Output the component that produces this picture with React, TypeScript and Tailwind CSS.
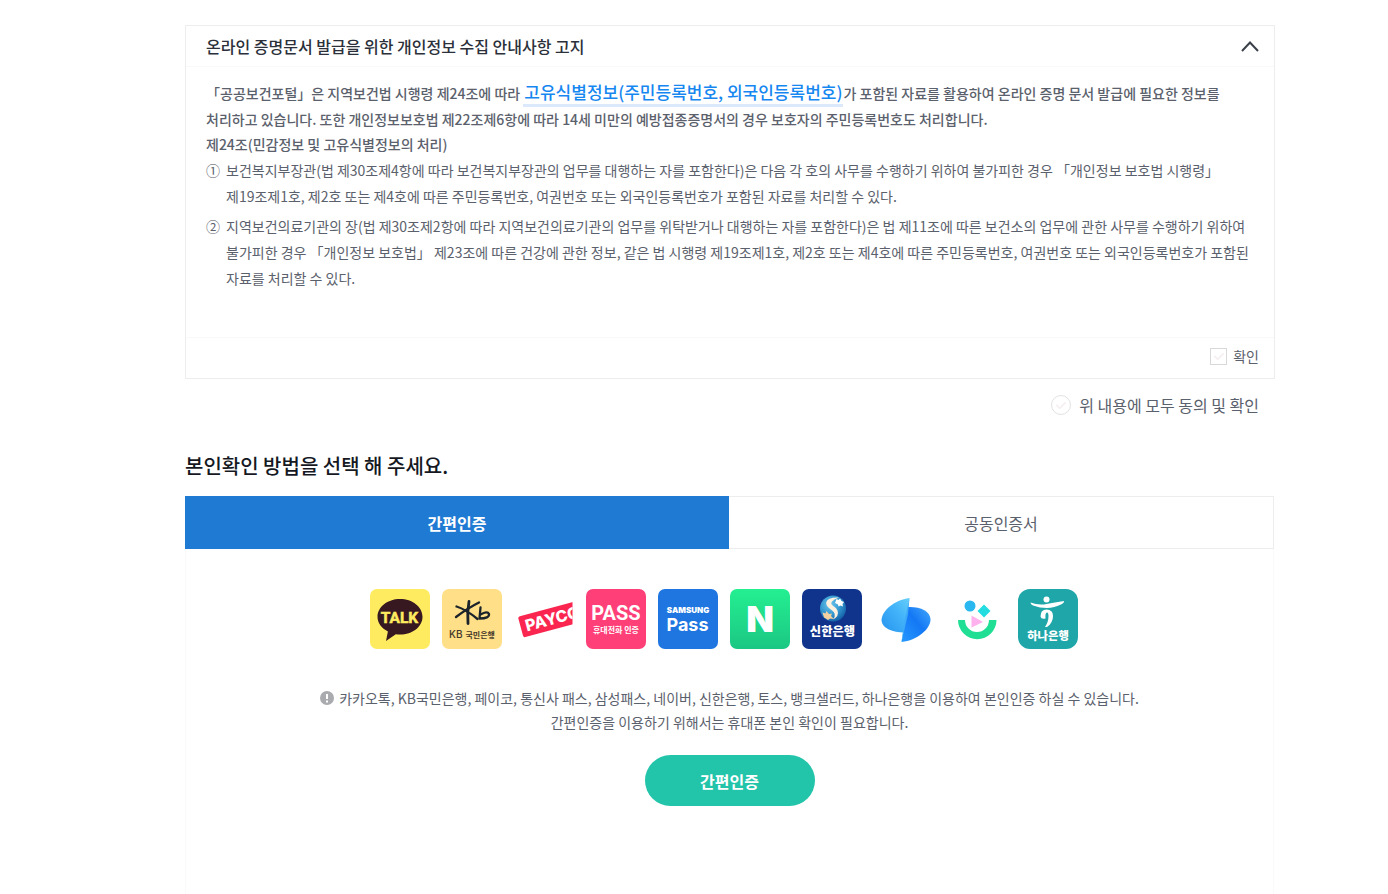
import { useState } from "react";
import type { ReactNode } from "react";

const KR = "'Noto Sans CJK KR', sans-serif";

function Tile({ fill, radius = 7, children }: { fill: string; radius?: number; children: ReactNode }) {
  return (
    <svg viewBox="0 0 60 60" className="size-[60px]" aria-hidden="true">
      <rect width="60" height="60" rx={radius} fill={fill} />
      {children}
    </svg>
  );
}

function Kakao() {
  return (
    <Tile fill="#ffeb60">
      <path d="M30 10C17.500 10 7.500 18 7.500 27.800c0 6.200 4 11.500 10.400 14.600L16 52l9.800-6.700c1.300.2 2.800.3 4.200.3 12.500 0 22.500-7.800 22.500-17.800S42.500 10 30 10z" fill="#371820" />
      <text x="29.500" y="34" textAnchor="middle" fontFamily="'Liberation Sans Narrow', Roboto, sans-serif" fontWeight="700" fontSize="15.500" fill="#ffeb60" stroke="#ffeb60" strokeWidth=".5">TALK</text>
    </Tile>
  );
}

function Kb() {
  return (
    <Tile fill="#ffdf87">
      <g fill="none" stroke="#1b232b" strokeWidth="2.300" strokeLinecap="round" strokeLinejoin="round">
        <path d="M27 12.500Q25 23 26 34.500" strokeWidth="2.800" />
        <path d="M14.500 17.500Q24 20.500 35.500 30" />
        <path d="M37 13.500Q26 19 14 28" />
        <path d="M38.500 18.500L37.500 29.500Q47.500 29.500 47 25Q45.500 21.500 38.500 25.500" />
      </g>
      <text x="7" y="49" fontFamily="Inter, sans-serif" fontWeight="500" fontSize="10" fill="#42372a">KB</text>
      <text x="23.500" y="48.500" fontFamily={KR} fontWeight="700" fontSize="8" fill="#42372a">국민은행</text>
    </Tile>
  );
}

function Payco() {
  return (
    <Tile fill="#ffffff">
      <clipPath id="payco-clip"><rect width="58.500" height="60" /></clipPath>
      <g clipPath="url(#payco-clip)">
        <g transform="rotate(-15 5 28)">
          <rect x="4" y="27.500" width="72" height="21.500" rx="2" fill="#fb2650" />
          <text x="9" y="44" fontFamily="Inter, sans-serif" fontWeight="800" fontSize="16" fill="#fff">PAYCO</text>
        </g>
      </g>
    </Tile>
  );
}

function Pass() {
  return (
    <Tile fill="#ff3f78">
      <text x="30" y="31" textAnchor="middle" fontFamily="'Liberation Sans Narrow', Roboto, sans-serif" fontWeight="700" fontSize="20" fill="#fff">PASS</text>
      <text x="30" y="43.500" textAnchor="middle" fontFamily={KR} fontWeight="700" fontSize="8" fill="#fff">휴대전화 인증</text>
    </Tile>
  );
}

function SamsungPass() {
  return (
    <Tile fill="#1f76e0">
      <text x="30" y="23.500" textAnchor="middle" fontFamily="Inter, sans-serif" fontWeight="900" fontSize="8" fill="#fff">SAMSUNG</text>
      <text x="29.500" y="41.500" textAnchor="middle" fontFamily="Inter, sans-serif" fontWeight="700" fontSize="18" fill="#fff">Pass</text>
    </Tile>
  );
}

function Naver() {
  return (
    <Tile fill="url(#naver-fill)">
      <defs>
        <linearGradient id="naver-fill" x1="0" y1="0" x2="0" y2="1">
          <stop offset="0" stopColor="#24ef91" />
          <stop offset="1" stopColor="#1bc783" />
        </linearGradient>
      </defs>
      <text x="30" y="43" textAnchor="middle" fontFamily="Inter, sans-serif" fontWeight="900" fontSize="36" fill="#fff">N</text>
    </Tile>
  );
}

function Shinhan() {
  return (
    <Tile fill="#10348b">
      <defs>
        <radialGradient id="shinhan-globe" cx=".4" cy=".35" r=".65">
          <stop offset="0" stopColor="#6fc8ed" />
          <stop offset=".6" stopColor="#3296cf" />
          <stop offset="1" stopColor="#1765ac" />
        </radialGradient>
      </defs>
      <circle cx="31" cy="19.500" r="13" fill="url(#shinhan-globe)" />
      <path d="M37 8.500Q25.500 8 24.200 13.500q-.5 3.500 5.300 7.500 6 4 1.500 9.500 6.500-3.500 4.500-9-1.500-3-5.500-5.500-3.500-3.500 7-7.500z" fill="#fff1df" />
      <path d="M33 14l1.500-4 2 1 1.500-1.500 1.500 2.500 2.500 1-1.500 2 .5 2.500-2.500-1-2 1-.5-2z" fill="#fff" />
      <path d="M20.500 23.500l3 1 1-2.500 2.500 3 3-.5-1 2.500 3 3-4-.5-2 1.500-3-2-1-.5z" fill="#f4d1a0" />
      <text x="30.500" y="47" textAnchor="middle" fontFamily={KR} fontWeight="900" fontSize="12.300" fill="#fff">신한은행</text>
    </Tile>
  );
}

function Toss() {
  return (
    <Tile fill="#ffffff">
      <defs>
        <linearGradient id="toss-left" x1="0" y1="1" x2="1" y2="0">
          <stop offset="0" stopColor="#2593ee" />
          <stop offset=".6" stopColor="#43b4fa" />
          <stop offset="1" stopColor="#66cff8" />
        </linearGradient>
        <linearGradient id="toss-right" x1="1" y1="0" x2="0" y2="1">
          <stop offset="0" stopColor="#43aafa" />
          <stop offset=".45" stopColor="#1478f5" />
          <stop offset="1" stopColor="#2699ff" />
        </linearGradient>
      </defs>
      <path d="M35.500 9C20 11 7.500 22 7.500 31.500 8 39.500 19 43.500 30 43.500z" fill="url(#toss-left)" />
      <path d="M34 18C46 17.500 56.500 22 56.500 30.500 56.500 40 43 51.500 27.500 53z" fill="url(#toss-right)" />
      <path d="M35.500 9L34 25 27.500 53 30 34z" fill="#3fabf8" />
    </Tile>
  );
}

function BankSalad() {
  return (
    <Tile fill="#ffffff">
      <circle cx="24" cy="17" r="5.500" fill="#29b7ef" />
      <path d="M38 15.500l6.500 6.500-6.500 6.500-6.500-6.500z" fill="#23dce0" />
      <path d="M25.500 26.500l11.500 6.500-11.500 5.500z" fill="#ffb2ed" />
      <path d="M12 31h7a12 12 0 0 0 24 0h7.500a19.250 19.250 0 0 1-38.500 0z" fill="#20df94" />
    </Tile>
  );
}

function Hana() {
  return (
    <Tile fill="#1fa6a9" radius={12}>
      <circle cx="28.500" cy="10.500" r="3" fill="#fff" />
      <path d="M12.500 13.500q8 3 16 1.500t17.500-3q.5 1.500-2 3-8 4-15 4t-14-2.500q-2.500-1-2.500-3z" fill="#fff" />
      <path d="M22.500 27.500q0-7 6-7 6.500 0 6.500 6.500 0 7-6 11h-2q3.500-5 3.500-11 0-3.500-1.500-3.500-2 0-1.500 6-4.500 1-5-2z" fill="#fff" />
      <text x="30" y="50.500" textAnchor="middle" fontFamily={KR} fontWeight="900" fontSize="11.300" fill="#fff">하나은행</text>
    </Tile>
  );
}

const providers = [
  { name: "카카오톡", Logo: Kakao },
  { name: "KB국민은행", Logo: Kb },
  { name: "페이코", Logo: Payco },
  { name: "통신사 패스", Logo: Pass },
  { name: "삼성패스", Logo: SamsungPass },
  { name: "네이버", Logo: Naver },
  { name: "신한은행", Logo: Shinhan },
  { name: "토스", Logo: Toss },
  { name: "뱅크샐러드", Logo: BankSalad },
  { name: "하나은행", Logo: Hana },
];

function Check({ round = false, children }: { round?: boolean; children: ReactNode }) {
  return (
    <label className={round ? "flex items-center gap-2 text-base" : "flex items-center gap-1.5 text-sm"}>
      <span className="relative flex items-center justify-center">
        <input
          type="checkbox"
          className={
            round
              ? "peer size-5 appearance-none rounded-full border border-[#e2e2e2] bg-white"
              : "peer size-[17px] appearance-none border border-[#d8d8d8] bg-white"
          }
        />
        <svg viewBox="0 0 14 10" className="pointer-events-none absolute w-3 text-[#f6eff1] peer-checked:text-[#1f7ad3]" fill="none" stroke="currentColor" strokeWidth="2">
          <path d="M1.500 4.500L5.500 8.500L12.500 1.500" />
        </svg>
      </span>
      {children}
    </label>
  );
}

export default function App() {
  const [open, setOpen] = useState(true);
  const [tab, setTab] = useState(0);
  const tabs = ["간편인증", "공동인증서"];

  return (
    <main className="min-h-screen bg-white pt-[25px] pr-[113px] pl-[185px] font-['Noto_Sans_CJK_KR',sans-serif] text-sm text-[#5b616c]">
      <section className="border border-[#ededed]">
        <h2 className="border-b border-[#f9f9f9] text-base font-medium text-[#2b303a]">
          <button type="button" aria-expanded={open} onClick={() => setOpen(!open)} className="flex h-10 w-full items-center justify-between pr-[15px] pl-5 text-left">
            온라인 증명문서 발급을 위한 개인정보 수집 안내사항 고지
            <svg viewBox="0 0 18 12" className={open ? "w-[18px]" : "w-[18px] rotate-180"} fill="none" stroke="#3b414a" strokeWidth="2" aria-hidden="true">
              <path d="M1 11L9 2.500L17 11" />
            </svg>
          </button>
        </h2>
        {open && (
          <div className="h-[271px] border-b border-[#f9f9f9] px-5 pt-3 leading-[25px]">
            <p className="font-medium">
              「공공보건포털」은 지역보건법 시행령 제24조에 따라{" "}
              <strong className="inline-block border-b-3 border-[#dce8fb] px-px text-[17px] leading-[25px] font-medium text-[#1687f0]">
                고유식별정보(주민등록번호, 외국인등록번호)
              </strong>
              가 포함된 자료를 활용하여 온라인 증명 문서 발급에 필요한 정보를
              <br />
              처리하고 있습니다. 또한 개인정보보호법 제22조제6항에 따라 14세 미만의 예방접종증명서의 경우 보호자의 주민등록번호도 처리합니다.
              <br />
              제24조(민감정보 및 고유식별정보의 처리)
            </p>
            <ol className="flex flex-col gap-1 leading-[26px]">
              <li className="flex">
                <span className="w-5 shrink-0">①</span>
                <span>
                  보건복지부장관(법 제30조제4항에 따라 보건복지부장관의 업무를 대행하는 자를 포함한다)은 다음 각 호의 사무를 수행하기 위하여 불가피한 경우 「개인정보 보호법 시행령」
                  <br />
                  제19조제1호, 제2호 또는 제4호에 따른 주민등록번호, 여권번호 또는 외국인등록번호가 포함된 자료를 처리할 수 있다.
                </span>
              </li>
              <li className="flex">
                <span className="w-5 shrink-0">②</span>
                <span>
                  지역보건의료기관의 장(법 제30조제2항에 따라 지역보건의료기관의 업무를 위탁받거나 대행하는 자를 포함한다)은 법 제11조에 따른 보건소의 업무에 관한 사무를 수행하기 위하여
                  <br />
                  불가피한 경우 「개인정보 보호법」 제23조에 따른 건강에 관한 정보, 같은 법 시행령 제19조제1호, 제2호 또는 제4호에 따른 주민등록번호, 여권번호 또는 외국인등록번호가 포함된
                  <br />
                  자료를 처리할 수 있다.
                </span>
              </li>
            </ol>
          </div>
        )}
        <div className="flex h-10 items-center justify-end pr-[15px] pb-1">
          <Check>확인</Check>
        </div>
      </section>

      <div className="mt-[14px] flex justify-end pr-4">
        <Check round>위 내용에 모두 동의 및 확인</Check>
      </div>

      <h3 className="mt-[34px] text-xl leading-[30px] font-medium text-[#15191f]">본인확인 방법을 선택 해 주세요.</h3>

      <section className="mt-[15px] mr-px">
        <div role="tablist" className="flex text-base">
          {tabs.map((name, i) => (
            <button
              key={name}
              type="button"
              role="tab"
              aria-selected={tab === i}
              onClick={() => setTab(i)}
              className={
                tab === i
                  ? "h-[53px] flex-1 bg-[#1f7ad3] font-bold text-white"
                  : "h-[53px] flex-1 border border-l-0 border-[#ededed]"
              }
            >
              {name}
            </button>
          ))}
        </div>
        <div className="flex min-h-[345px] flex-col items-center border-x border-[#fafafa] pt-10">
          <ul className="flex gap-3 pr-3">
            {providers.map(({ name, Logo }) => (
              <li key={name}>
                <button type="button" aria-label={name} className="block">
                  <Logo />
                </button>
              </li>
            ))}
          </ul>
          <div className="mt-[37px] text-center leading-6">
            <p className="flex items-center justify-center gap-[5px]">
              <svg viewBox="0 0 14 14" className="size-3.5" aria-hidden="true">
                <circle cx="7" cy="7" r="7" fill="#a9abae" />
                <path d="M7 3v5M7 9.500v2" stroke="#fff" strokeWidth="2" />
              </svg>
              카카오톡, KB국민은행, 페이코, 통신사 패스, 삼성패스, 네이버, 신한은행, 토스, 뱅크샐러드, 하나은행을 이용하여 본인인증 하실 수 있습니다.
            </p>
            <p>간편인증을 이용하기 위해서는 휴대폰 본인 확인이 필요합니다.</p>
          </div>
          <button type="button" className="mt-[21px] h-[51px] w-[170px] rounded-full bg-[#22c4aa] text-base font-bold text-white">
            간편인증
          </button>
        </div>
      </section>
    </main>
  );
}
